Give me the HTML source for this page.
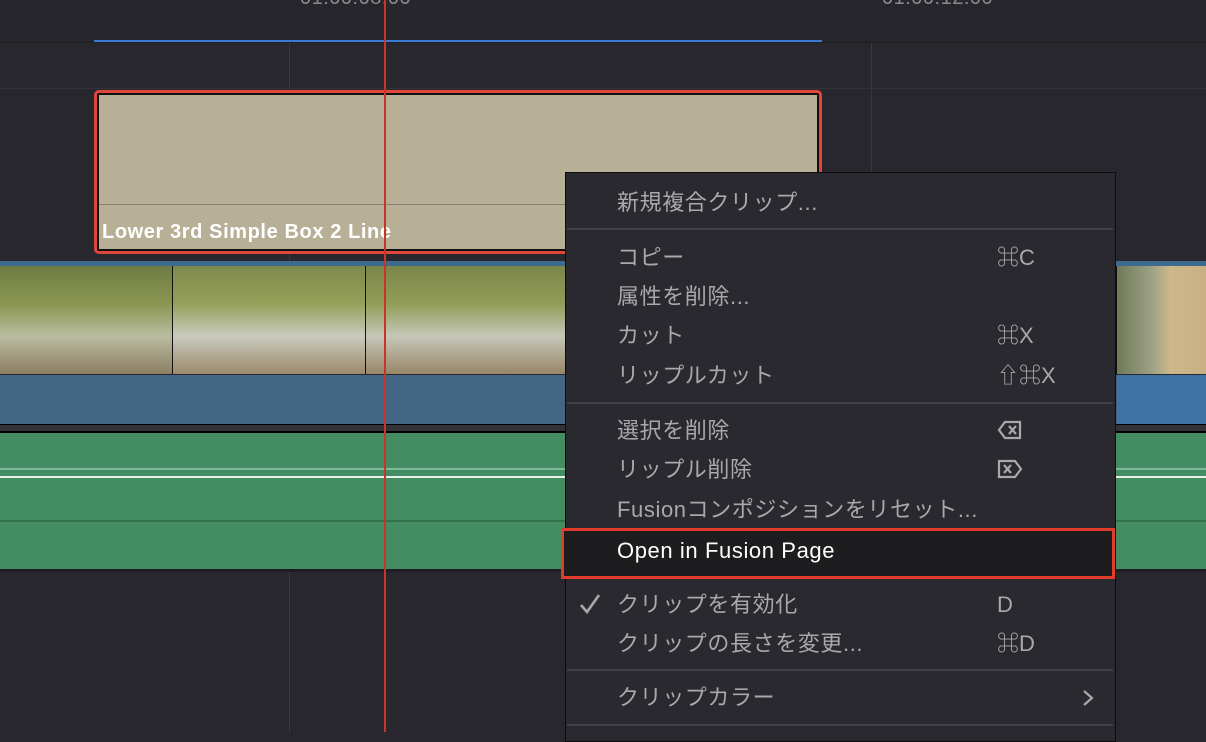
<!DOCTYPE html>
<html><head><meta charset="utf-8"><style>
*{margin:0;padding:0;box-sizing:border-box}
body{width:1206px;height:732px;overflow:hidden;background:#27272d;position:relative;font-family:"Liberation Sans","Noto Sans CJK JP",sans-serif}
.a{position:absolute}
.mi{position:absolute;left:617px;font-size:22px;letter-spacing:0.6px;color:#a9a9ab;white-space:nowrap;line-height:24px}
.sc{position:absolute;left:997px;font-size:22px;color:#a9a9ab;line-height:24px}
.sep{position:absolute;left:567px;width:546px;height:2px;background:#404046}
</style></head><body>
<div class="a" style="left:0;top:0;width:1206px;height:42px;background:#26262c"></div>
<div class="a" style="left:300px;top:-13px;font-size:20px;letter-spacing:0.5px;color:#8a8a8e">01:00:08:00</div>
<div class="a" style="left:882px;top:-13px;font-size:20px;letter-spacing:0.5px;color:#8a8a8e">01:00:12:00</div>
<div class="a" style="left:0;top:41px;width:1206px;height:2px;background:#222226"></div>
<div class="a" style="left:94px;top:40px;width:728px;height:2px;background:#3a7ad6"></div>
<div class="a" style="left:289px;top:43px;width:1px;height:690px;background:#38383e"></div>
<div class="a" style="left:871px;top:43px;width:1px;height:690px;background:#38383e"></div>
<div class="a" style="left:0;top:88px;width:1206px;height:1px;background:#323238"></div>
<!-- title clip -->
<div class="a" style="left:94px;top:90px;width:728px;height:164px;border:3px solid #e0463a;border-radius:5px;background:#111"></div>
<div class="a" style="left:99px;top:95px;width:718px;height:154px;background:#b8af97"></div>
<div class="a" style="left:99px;top:204px;width:718px;height:1px;background:#8a8270"></div>
<div class="a" style="left:102px;top:221px;font-size:20px;letter-spacing:0.6px;font-weight:bold;color:#fff">Lower 3rd Simple Box 2 Line</div>
<!-- video track -->
<div class="a" style="left:0;top:261px;width:1206px;height:5px;background:#3f6a90"></div>
<div class="a" style="left:0;top:266px;width:1206px;height:108px;background:#111"></div>
<div class="a" style="left:0;top:266px;width:172px;height:108px;background:linear-gradient(180deg,#6f7c44 0%,#8a9650 35%,#b8bca0 65%,#8d7e62 100%)"></div>
<div class="a" style="left:173px;top:266px;width:192px;height:108px;background:linear-gradient(180deg,#7e8a4c 0%,#96a05a 35%,#c9cbbd 65%,#9c8a6c 100%)"></div>
<div class="a" style="left:366px;top:266px;width:200px;height:108px;background:linear-gradient(180deg,#7a864a 0%,#939d58 35%,#c5c7b8 65%,#988668 100%)"></div>
<div class="a" style="left:1117px;top:266px;width:89px;height:108px;background:linear-gradient(90deg,#6f7a58 0%,#9ea288 40%,#cdb88a 60%,#c9b084 100%)"></div>
<div class="a" style="left:0;top:375px;width:1206px;height:49px;background:#446685"></div>
<div class="a" style="left:1117px;top:375px;width:89px;height:49px;background:#3e73a3"></div>
<div class="a" style="left:0;top:424px;width:1206px;height:9px;background:#333337;border-top:1px solid #000;border-bottom:2px solid #000"></div>
<!-- audio -->
<div class="a" style="left:0;top:433px;width:1206px;height:137px;background:#448c62"></div>
<div class="a" style="left:0;top:468px;width:1206px;height:2px;background:#7fb898"></div>
<div class="a" style="left:0;top:476px;width:1206px;height:2px;background:#e8f0ea"></div>
<div class="a" style="left:0;top:520px;width:1206px;height:2px;background:#33704c"></div>
<div class="a" style="left:0;top:569px;width:1206px;height:3px;background:#1e1e22"></div>
<!-- playhead -->
<div class="a" style="left:384px;top:0;width:2px;height:732px;background:#c8332a"></div>
<!-- menu -->
<div class="a" style="left:565px;top:172px;width:551px;height:570px;background:#29292f;border:1px solid #0c0c0e"></div>
<div class="mi" style="top:191px">新規複合クリップ...</div>
<div class="sep" style="top:228px"></div>
<div class="mi" style="top:246px">コピー</div><div class="sc" style="top:246px">⌘C</div>
<div class="mi" style="top:285px">属性を削除...</div>
<div class="mi" style="top:324px">カット</div><div class="sc" style="top:324px">⌘X</div>
<div class="mi" style="top:364px">リップルカット</div><div class="sc" style="top:364px">⇧⌘X</div>
<div class="sep" style="top:402px"></div>
<div class="mi" style="top:419px">選択を削除</div>
<svg class="a" style="left:997px;top:420px" width="26" height="20" viewBox="0 0 26 20"><path d="M8 2H23V18H8L2 10Z" fill="none" stroke="#a9a9ab" stroke-width="2.2"/><path d="M12 6L19 14M19 6L12 14" stroke="#a9a9ab" stroke-width="2.2"/></svg>
<div class="mi" style="top:458px">リップル削除</div>
<svg class="a" style="left:997px;top:459px" width="26" height="20" viewBox="0 0 26 20"><path d="M2 2H18L24 10L18 18H2Z" fill="none" stroke="#a9a9ab" stroke-width="2.2"/><path d="M7 6L14 14M14 6L7 14" stroke="#a9a9ab" stroke-width="2.2"/></svg>
<div class="mi" style="top:498px">Fusionコンポジションをリセット...</div>
<div class="a" style="left:561px;top:528px;width:554px;height:51px;border:3px solid #e03e2a;background:#1d1d1f"></div>
<div class="mi" style="top:539px;color:#fff">Open in Fusion Page</div>
<svg class="a" style="left:579px;top:593px" width="22" height="22" viewBox="0 0 22 22"><path d="M2 12L8 19L20 2" fill="none" stroke="#a9a9ab" stroke-width="2.6"/></svg>
<div class="mi" style="top:593px">クリップを有効化</div><div class="sc" style="top:593px">D</div>
<div class="mi" style="top:632px">クリップの長さを変更...</div><div class="sc" style="top:632px">⌘D</div>
<div class="sep" style="top:669px"></div>
<div class="mi" style="top:686px">クリップカラー</div>
<svg class="a" style="left:1081px;top:688px" width="14" height="20" viewBox="0 0 14 20"><path d="M3 3L11 10L3 17" fill="none" stroke="#a9a9ab" stroke-width="2.2"/></svg>
<div class="sep" style="top:724px"></div>
</body></html>
